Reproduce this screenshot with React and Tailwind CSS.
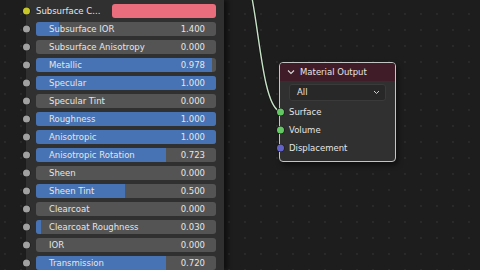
const rows = [
  { label: 'Subsurface IOR', value: '1.400', fill: 13 },
  { label: 'Subsurface Anisotropy', value: '0.000', fill: 0 },
  { label: 'Metallic', value: '0.978', fill: 97.5 },
  { label: 'Specular', value: '1.000', fill: 100 },
  { label: 'Specular Tint', value: '0.000', fill: 0 },
  { label: 'Roughness', value: '1.000', fill: 100 },
  { label: 'Anisotropic', value: '1.000', fill: 100 },
  { label: 'Anisotropic Rotation', value: '0.723', fill: 72.3 },
  { label: 'Sheen', value: '0.000', fill: 0 },
  { label: 'Sheen Tint', value: '0.500', fill: 49.5 },
  { label: 'Clearcoat', value: '0.000', fill: 0 },
  { label: 'Clearcoat Roughness', value: '0.030', fill: 3 },
  { label: 'IOR', value: '0.000', fill: 0 },
  { label: 'Transmission', value: '0.720', fill: 72 },
];

function Socket({ color }) {
  return (
    <span
      className="absolute left-[-3.5px] top-1/2 -translate-y-1/2 w-[7px] h-[7px] rounded-full shadow-[0_0_0_0.6px_#181818]"
      style={{ background: color }}
    />
  );
}

function SliderRow({ label, value, fill }) {
  return (
    <div className="relative h-[14px] pl-[10px] pr-[8px]">
      <Socket color="#a1a1a1" />
      <div className="relative h-full rounded-[3px] bg-[#545454] overflow-hidden">
        <div className="absolute inset-y-0 left-0 bg-[#4772b3]" style={{ width: `${fill}%` }} />
        <div className="relative h-full flex items-center justify-between pl-[13px] pr-[11px]">
          <span>{label}</span>
          <span>{value}</span>
        </div>
      </div>
    </div>
  );
}

export default function App() {
  return (
    <div
      className="relative w-[480px] h-[270px] overflow-hidden bg-[#1d1d1d] bg-[radial-gradient(circle,#292929_0.9px,transparent_1.3px)] bg-size-[16px_16px] bg-position-[-3px_6px] text-[#e6e6e6] text-[8.5px] leading-none"
      style={{ fontFamily: '"DejaVu Sans", sans-serif' }}
    >
      {/* Principled BSDF node (partially off-screen) */}
      <div className="absolute left-[26px] top-0 w-[198px] h-[270px] bg-[#303030] shadow-[4px_0_4px_rgba(0,0,0,0.45)] flex flex-col gap-[4.2px] pt-[4px]">
        <div className="relative h-[14px] pl-[10px] pr-[8px] flex items-center">
          <Socket color="#c7c729" />
          <span className="w-[76px]">Subsurface C...</span>
          <div className="flex-1 h-full rounded-[3px] bg-[#e96d7c]" />
        </div>
        {rows.map(r => (
          <SliderRow key={r.label} {...r} />
        ))}
      </div>

      {/* Wire */}
      <svg className="absolute inset-0" width="480" height="270">
        <path d="M252,-2 C260,40 264,104 279,111" fill="none" stroke="#151515" strokeWidth="3" />
        <path d="M252,-2 C260,40 264,104 279,111" fill="none" stroke="#c6e2c6" strokeWidth="1.4" />
      </svg>

      {/* Material Output node */}
      <div className="absolute left-[279px] top-[62px] w-[117px] h-[100px] rounded-[4px] border border-[#c4c4c4] bg-[#303030] shadow-[2px_3px_5px_rgba(0,0,0,0.5)]">
        <div className="h-[18px] rounded-t-[3px] bg-[#3f1c27] flex items-center pl-[7px] gap-[5px] text-[#e4e4e4]">
          <svg width="8" height="6" viewBox="0 0 8 6">
            <path d="M1,1.5 L4,4.5 L7,1.5" fill="none" stroke="#d8d8d8" strokeWidth="1.1" />
          </svg>
          <span>Material Output</span>
        </div>
        <div className="px-[9px] pt-[3px]">
          <div className="h-[17px] rounded-[3px] bg-[#282828] border border-[#3a3a3a] flex items-center justify-between pl-[7px] pr-[5px]">
            <span>All</span>
            <svg width="7" height="5" viewBox="0 0 7 5">
              <path d="M1,1 L3.5,3.5 L6,1" fill="none" stroke="#d0d0d0" strokeWidth="1" />
            </svg>
          </div>
        </div>
        <div className="flex flex-col gap-[4px] pt-[4px]">
          {[
            ['Surface', '#63c763'],
            ['Volume', '#63c763'],
            ['Displacement', '#6363c7'],
          ].map(([name, c]) => (
            <div key={name} className="relative h-[14px] flex items-center pl-[9px]">
              <Socket color={c} />
              <span>{name}</span>
            </div>
          ))}
        </div>
      </div>
    </div>
  );
}
